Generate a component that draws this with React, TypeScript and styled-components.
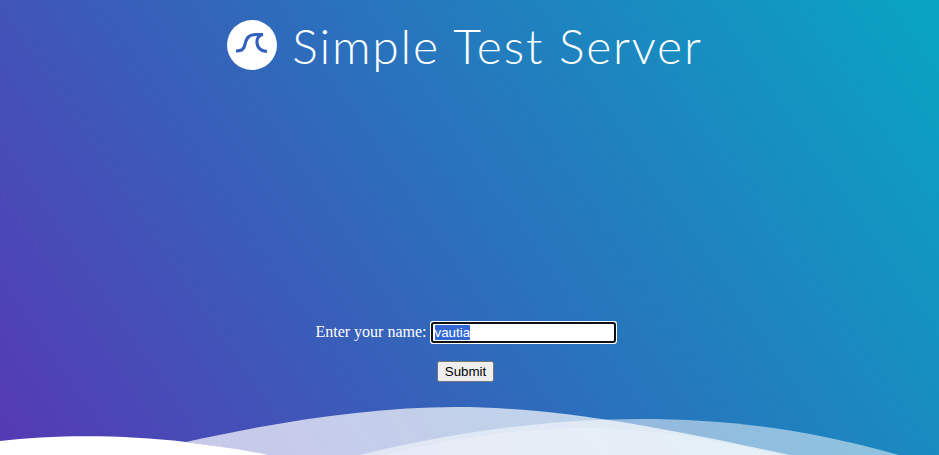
import React, { useEffect, useRef } from "react";
import styled, { createGlobalStyle } from "styled-components";

const GlobalStyle = createGlobalStyle`
  html, body {
    margin: 0;
    height: 100%;
  }
  #root {
    height: 100%;
  }
`;

const Page = styled.div`
  position: relative;
  height: 455px;
  overflow: hidden;
  background: linear-gradient(56deg, #5639b4 0%, #2b70bc 50%, #08a5c3 100%);
  color: #fff;
  font-family: "Liberation Serif", serif;
  font-size: 16px;
`;

const Header = styled.header`
  display: flex;
  align-items: center;
  justify-content: center;
  gap: 15px;
  height: 90px;
  padding-right: 9px;
`;

const Title = styled.h1`
  margin: 0;
  font-family: Lato, sans-serif;
  font-size: 48px;
  font-weight: 300;
  letter-spacing: 1.8px;
`;

const NameForm = styled.form`
  display: flex;
  flex-direction: column;
  align-items: center;
  gap: 18px;
  padding: 232px 8px 0 0;
`;

const NameInput = styled.input`
  width: 177px;
  margin-left: 4px;
  font-family: "Liberation Sans", sans-serif;
  font-size: 13.33px;
`;

const SubmitButton = styled.input`
  font-family: "Liberation Sans", sans-serif;
  font-size: 13.33px;
`;

const WaveArt = styled.svg`
  position: absolute;
  left: 0;
  bottom: 0;
  display: block;
`;

const Logo = () => (
  <svg width="50" height="50" viewBox="0 0 50 50">
    <circle cx="25" cy="25" r="25" fill="#fff" />
    <g fill="none" stroke="#3262bd" strokeWidth="3.200">
      <path d="M9 31C14 31 16.500 30 17.500 26C19 20 20 15 28 14.500L36 14.500" />
      <path d="M36 14.500C31 15.500 29.500 19 30 23C30.500 28 34 31 40 31.500" />
    </g>
  </svg>
);

const App: React.FC = () => {
  const inputRef = useRef<HTMLInputElement>(null);

  useEffect(() => {
    inputRef.current?.focus();
    inputRef.current?.select();
  }, []);

  return (
    <Page>
      <GlobalStyle />
      <Header>
        <Logo />
        <Title>Simple Test Server</Title>
      </Header>
      <NameForm onSubmit={(e) => e.preventDefault()}>
        <label>
          Enter your name:
          <NameInput ref={inputRef} type="text" defaultValue="vautia" />
        </label>
        <SubmitButton type="submit" value="Submit" />
      </NameForm>
      <WaveArt width="939" height="60" viewBox="0 395 939 60">
        <path
          d="M186 442C270 423 370 407 455 407C555 407 660 427 790 455H270Z"
          fill="#fff"
          fillOpacity="0.7"
        />
        <path
          d="M360 455C460 430 560 419 640 419C730 419 810 430 899 455Z"
          fill="#fff"
          fillOpacity="0.5"
        />
        <path
          d="M385 455C460 436 530 428 585 428C650 428 710 438 782 455Z"
          fill="#fff"
          fillOpacity="0.2"
        />
        <path d="M0 441C50 435 120 434 186 442C215 446 245 450 270 455H0Z" fill="#fff" />
      </WaveArt>
    </Page>
  );
};

export default App;
